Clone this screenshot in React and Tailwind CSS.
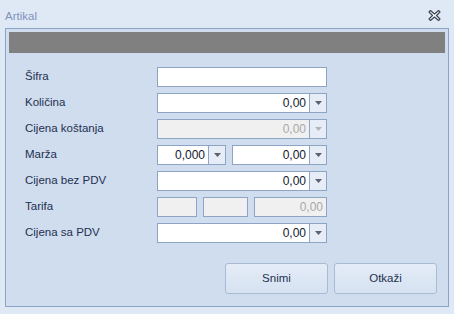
import React from 'react'

const font = { fontFamily: '"Liberation Sans", Tahoma, sans-serif' }

function Arrow({ disabled }) {
  return (
    <div className="w-[17px] h-full border-l border-[#8ea4c4] bg-[#e6edf7] flex items-center justify-center">
      <svg width="7" height="4" viewBox="0 0 7 4">
        <path d="M0 0H7L3.5 4Z" fill={disabled ? '#b4b4b4' : '#5a6270'} />
      </svg>
    </div>
  )
}

function Field({ value, width = 'w-[170px]', dropdown = true, disabled = false }) {
  return (
    <div className={`${width} h-[20px] flex border border-[#8ea4c4] ${disabled ? 'bg-[#f0f0f0]' : 'bg-white'}`}>
      <div className={`flex-1 flex items-center justify-end pr-[3px] text-[12px] ${disabled ? 'text-[#a8a8a8]' : 'text-[#101830]'}`}>{value}</div>
      {dropdown && <Arrow disabled={disabled} />}
    </div>
  )
}

function Row({ label, children }) {
  return (
    <div className="flex items-center h-[20px]">
      <div className="w-[132px] text-[11.5px] text-[#1e3050]">{label}</div>
      <div className="flex gap-[6px]">{children}</div>
    </div>
  )
}

export default function App() {
  return (
    <div className="w-[454px] h-[314px] bg-[#dfe9f5] relative overflow-hidden" style={font}>
      <div className="h-[28px] flex items-center justify-between pl-[5px] pr-[13px] pt-[5px]">
        <span className="text-[11.5px] text-[#7f92bc]">Artikal</span>
        <svg width="13" height="11" viewBox="0 0 13 11" className="mb-[2px]">
          <path d="M1 2L4.5 5.5L1 9L2.5 10.5L6.5 7L10.5 10.5L12 9L8.5 5.5L12 2L10.5 0.5L6.5 4L2.5 0.5Z" fill="#f4f7fb" stroke="#3c4250" strokeWidth="1.1" strokeLinejoin="round" />
        </svg>
      </div>
      <div className="mx-[5px] h-[279px] border border-[#8aa3c6] bg-[#d0ddee] p-[3px] flex flex-col">
        <div className="h-[21px] bg-[#808080]" />
        <div className="pl-[16px] pt-[14px] flex flex-col gap-[6px]">
          <Row label="Šifra"><Field value="" dropdown={false} /></Row>
          <Row label="Količina"><Field value="0,00" /></Row>
          <Row label="Cijena koštanja"><Field value="0,00" disabled /></Row>
          <Row label="Marža">
            <Field value="0,000" width="w-[69px]" />
            <Field value="0,00" width="w-[95px]" />
          </Row>
          <Row label="Cijena bez PDV"><Field value="0,00" /></Row>
          <Row label="Tarifa">
            <Field value="" width="w-[40px]" dropdown={false} disabled />
            <Field value="" width="w-[45px]" dropdown={false} disabled />
            <Field value="0,00" width="w-[73px]" dropdown={false} disabled />
          </Row>
          <Row label="Cijena sa PDV"><Field value="0,00" /></Row>
        </div>
        <div className="flex justify-end gap-[6px] pr-[8px] mt-[20px]">
          <button className="w-[103px] h-[31px] rounded-[3px] border border-[#a9bad3] bg-gradient-to-b from-[#e4ecf7] to-[#d6e2f1] text-[11.5px] text-[#1e3050]">Snimi</button>
          <button className="w-[103px] h-[31px] rounded-[3px] border border-[#a9bad3] bg-gradient-to-b from-[#e4ecf7] to-[#d6e2f1] text-[11.5px] text-[#1e3050]">Otkaži</button>
        </div>
      </div>
    </div>
  )
}
